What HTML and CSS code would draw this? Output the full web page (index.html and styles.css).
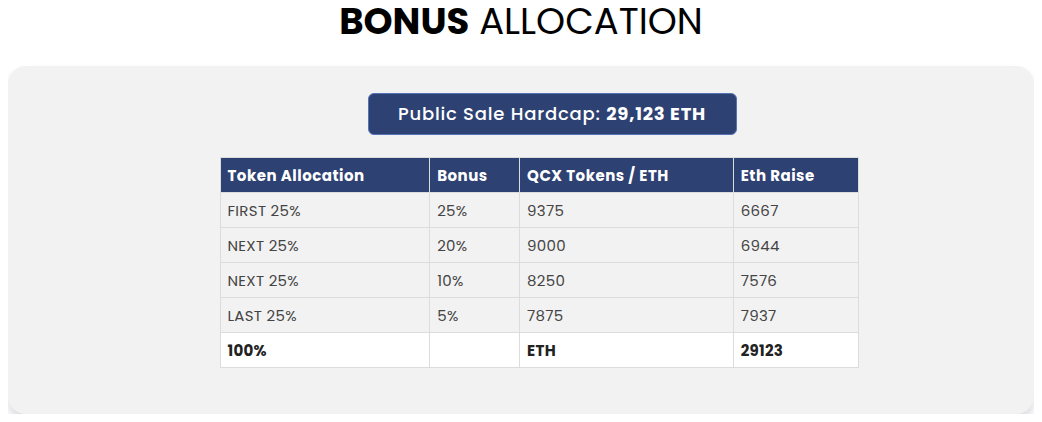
FILE: index.html
```html
<!DOCTYPE html>
<html lang="en">
<head>
    <meta charset="UTF-8">
    <title>Bonus Allocation</title>
    <meta name="viewport" content="width=device-width, initial-scale=1.0">
    <link rel="stylesheet" href="styles.css">
</head>
<body>

<h1 class="titulo"><strong>BONUS</strong> ALLOCATION</h1>

<div class="tarjeta">
    <div class="hardcap">Public Sale Hardcap: <strong>29,123 ETH</strong></div>

    <!-- Tabla de bonus -->
    <table class="tabla">
        <thead>
            <tr>
                <th class="c1">Token Allocation</th>
                <th class="c2">Bonus</th>
                <th class="c3">QCX Tokens / ETH</th>
                <th class="c4">Eth Raise</th>
            </tr>
        </thead>
        <tbody>
            <tr><td>FIRST 25%</td><td>25%</td><td>9375</td><td>6667</td></tr>
            <tr><td>NEXT 25%</td><td>20%</td><td>9000</td><td>6944</td></tr>
            <tr><td>NEXT 25%</td><td>10%</td><td>8250</td><td>7576</td></tr>
            <tr><td>LAST 25%</td><td>5%</td><td>7875</td><td>7937</td></tr>
            <tr class="total"><td>100%</td><td></td><td>ETH</td><td>29123</td></tr>
        </tbody>
    </table>
</div>

</body>
</html>
```

FILE: styles.css
```css
body {
    font-family: Poppins, "Open Sans", sans-serif;
    margin: 0 8px 8px;
    background-color: #fff;
    color: #333;
}
.titulo {
    text-align: center;
    font-size: 37px;
    font-weight: 400;
    color: #000;
    margin: 0;
    height: 66px;
    line-height: 42px;
}
.titulo strong {
    font-weight: 700;
}
.tarjeta {
    background: #f2f2f2;
    border-radius: 18px;
    box-shadow: 0 7px 10px rgba(40, 45, 70, 0.16);
    padding: 27px 0 46px;
    display: flex;
    flex-direction: column;
    align-items: center;
}
.hardcap {
    width: 367px;
    height: 40px;
    line-height: 40px;
    text-align: center;
    background: #2e4173;
    border: 1px solid #5673b8;
    border-radius: 6px;
    color: #fff;
    font-size: 18px;
    font-weight: 500;
    letter-spacing: 0.8px;
    margin: 0 0 22px 62px;
}
.hardcap strong {
    font-weight: 700;
}
.tabla {
    border-collapse: collapse;
    width: 639px;
    font-size: 15px;
    margin-left: 36px;
}
.tabla th, .tabla td {
    border: 1px solid #dcdcdc;
    height: 35px;
    padding: 0 7px;
    text-align: left;
    box-sizing: border-box;
}
.tabla th {
    background: #2e4173;
    color: #fff;
    font-weight: 700;
    letter-spacing: 0.5px;
}
.c1 { width: 210px; }
.c2 { width: 90px; }
.c3 { width: 214px; }
.c4 { width: 125px; }
.tabla td {
    color: #444;
    letter-spacing: 0.3px;
}
.total td {
    background: #fff;
    font-weight: 700;
    color: #222;
}
```
